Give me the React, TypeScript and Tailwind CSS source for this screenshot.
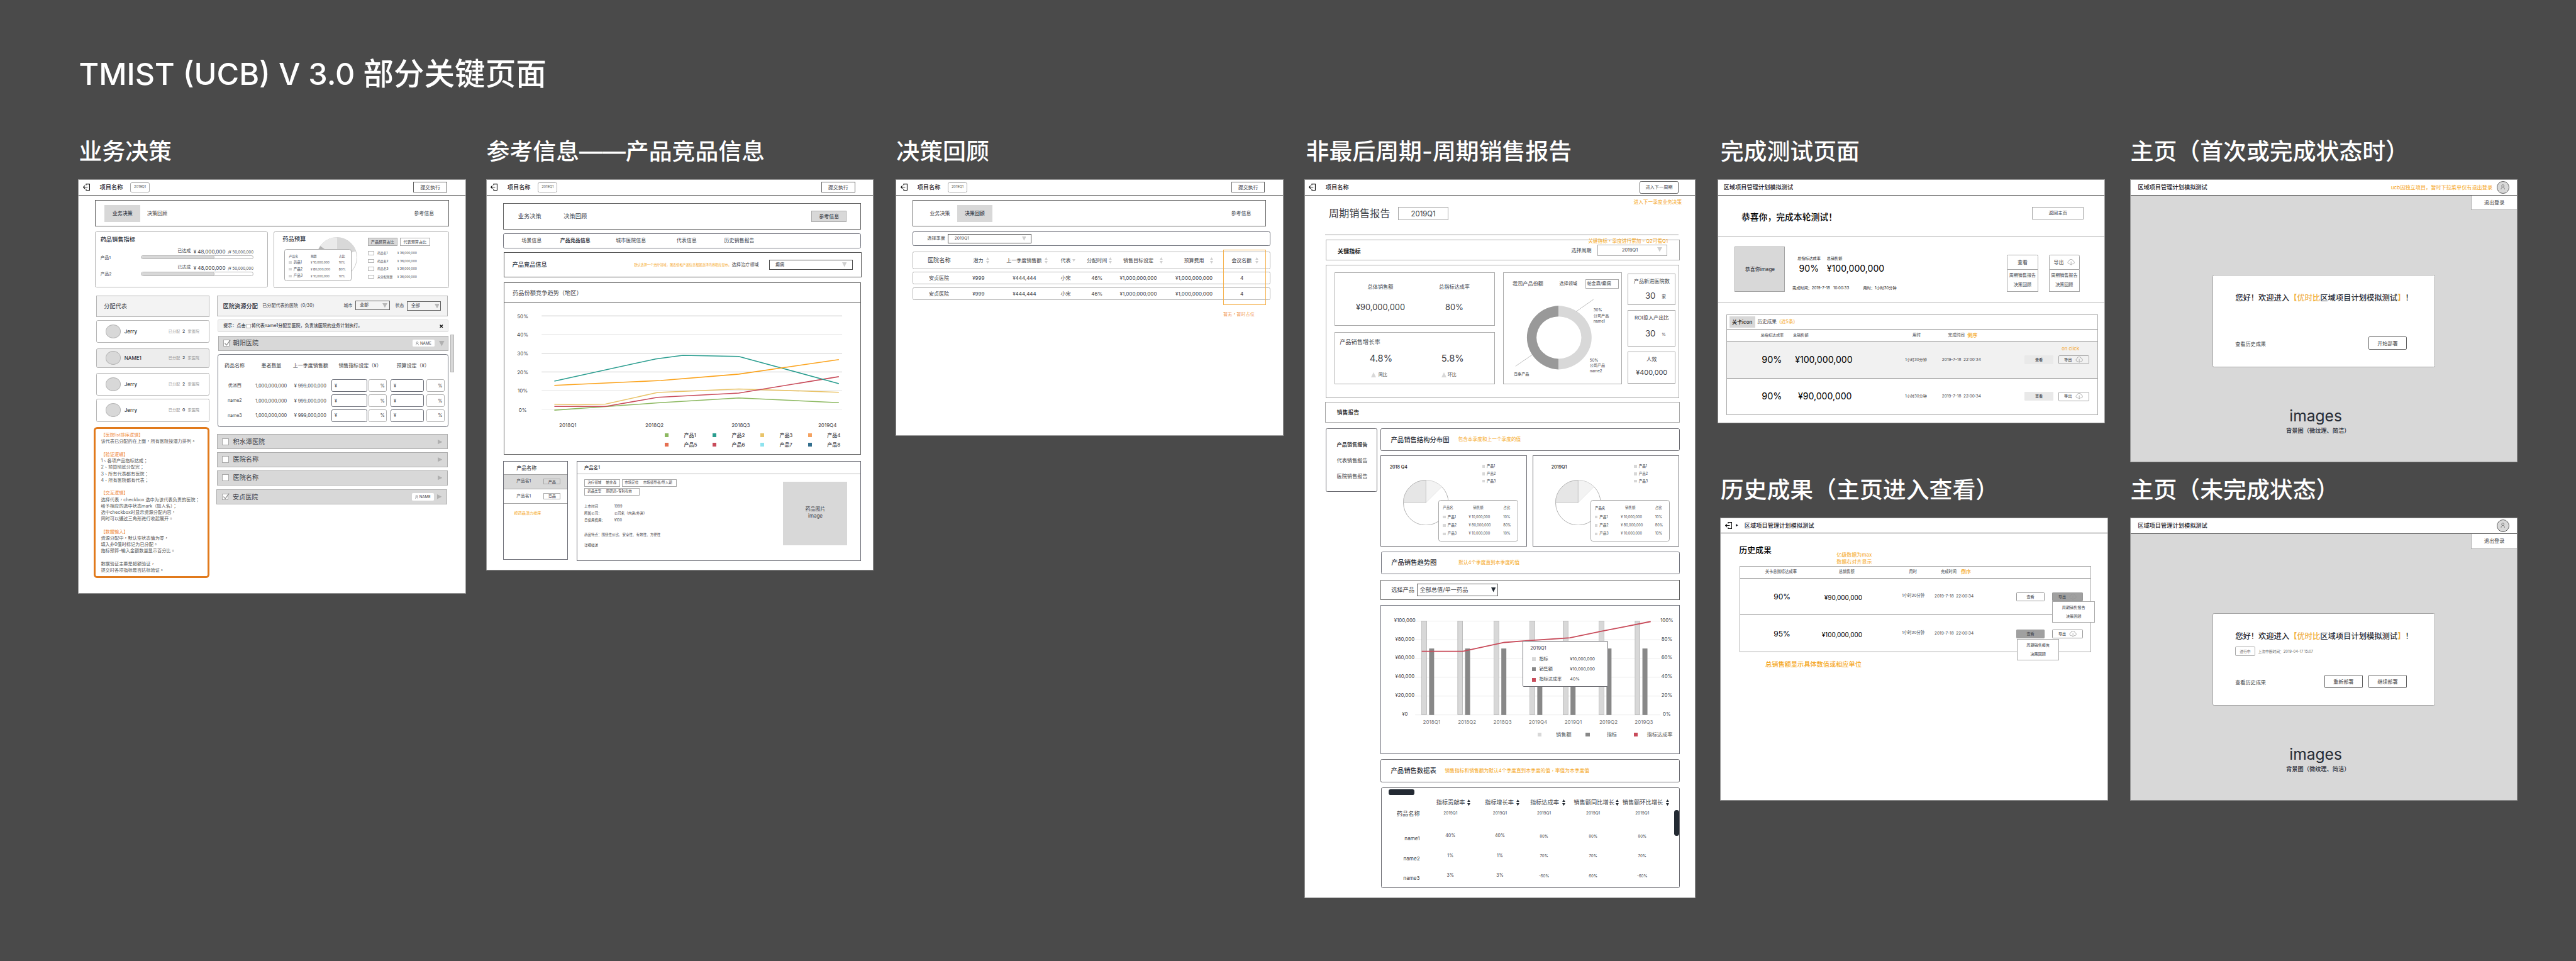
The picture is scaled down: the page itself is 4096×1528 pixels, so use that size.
import type { ReactNode } from "react";

/* ---------- shared pieces ---------- */

const TC = "[font-family:Inter,'Noto_Sans_CJK_TC',sans-serif]";

function ExitIcon() {
  return (
    <svg viewBox="0 0 18 18" className="h-[18px] w-[18px] shrink-0" fill="none" stroke="#111" strokeWidth="1.8">
      <path d="M8 4V1h9v16H8v-3" />
      <path d="M1 9h11M5 5L1 9l4 4" />
    </svg>
  );
}

function UserIcon({ className }: { className: string }) {
  return (
    <svg viewBox="0 0 16 20" className={className} fill="none" stroke="currentColor" strokeWidth="1.5">
      <circle cx="8" cy="6" r="4.5" />
      <path d="M1.5 19c0-5 2.500-8.500 6.500-8.500s6.500 3.500 6.500 8.500" />
    </svg>
  );
}

function CloudIcon() {
  return (
    <svg viewBox="0 0 20 16" className="h-[16px] w-[20px] shrink-0" fill="none" stroke="#979797" strokeWidth="1.200">
      <path d="M7 12.500H5a3.800 3.800 0 01-.8-7.400A5.800 5.800 0 0115.500 5a3.800 3.800 0 01-.5 7.500h-2" />
      <path d="M10 6v9M7.800 12.800L10 15l2.200-2.200" />
    </svg>
  );
}

function Down({ className }: { className: string }) {
  return (
    <svg viewBox="0 0 10 10" preserveAspectRatio="none" className={className} fill="currentColor">
      <path d="M0 0h10L5 10z" />
    </svg>
  );
}

function Up({ className }: { className: string }) {
  return (
    <svg viewBox="0 0 10 10" preserveAspectRatio="none" className={className} fill="currentColor">
      <path d="M0 10h10L5 0z" />
    </svg>
  );
}

function RightTri({ className }: { className: string }) {
  return (
    <svg viewBox="0 0 10 10" preserveAspectRatio="none" className={className} fill="currentColor">
      <path d="M0 0v10L10 5z" />
    </svg>
  );
}

function Sort({ className = "text-[#cfcfcf]" }: { className?: string }) {
  return (
    <span className={"flex flex-col gap-[2px] " + className}>
      <Up className="h-[7px] w-[8px]" />
      <Down className="h-[7px] w-[8px]" />
    </span>
  );
}

function Check({ checked = false }: { checked?: boolean }) {
  return (
    <span className="flex h-[17px] w-[17px] shrink-0 border border-[#a8a8a8] bg-white">
      {checked && (
        <svg viewBox="0 0 20 20" className="-mt-[3px] ml-[1px] h-[18px] w-[19px] shrink-0 overflow-visible" fill="none" stroke="#8a8a8a" strokeWidth="2.200">
          <path d="M2 10l5 6L18 1" />
        </svg>
      )}
    </span>
  );
}

function BoardHead({ badge = true, children }: { badge?: boolean; children: ReactNode }) {
  return (
    <header className="flex h-[40px] shrink-0 items-center border-b border-[#5c5c5c] pl-[11px]">
      <ExitIcon />
      <span className="ml-[25px] w-[79px] text-[15px] font-medium text-[#1f232b]">项目名称</span>
      {badge && (
        <span className="flex h-[26px] w-[50px] items-center justify-center rounded-[4px] border border-[#a8a8a8] text-[9px] text-[#555]">
          2019Q1
        </span>
      )}
      <div className="ml-auto flex">{children}</div>
    </header>
  );
}

function SubmitButton() {
  return (
    <span className="mr-[47px] flex h-[28px] w-[87px] items-center justify-center border border-[#666] text-[13px]">
      提交执行
    </span>
  );
}

function Title({ children }: { children: ReactNode }) {
  return <h2 className="flex h-[80px] items-center pt-[3px] text-[60px] font-medium text-white">{children}</h2>;
}

/* ---------- 业务决策 ---------- */

function Target({ name }: { name: string }) {
  return (
    <div className="flex h-[43px] shrink-0 items-start">
      <span className="mt-[19px] w-[104px] text-[11px] leading-[13px]">{name}</span>
      <div className="w-[292px]">
        <div className="flex h-[19px] items-center justify-end text-[13px]">
          <span className="-mt-[2px] text-[11.500px]">已达成</span>
          <span className="ml-[7px]">¥ 48,000,000</span>
          <span className="mt-[3px] ml-[6px] text-[10px]">/¥ 50,000,000</span>
        </div>
        <div className="h-[11px] overflow-hidden rounded-full border border-[#b4b4b4]">
          <div className="h-full w-[189px] rounded-r-full border-r border-[#b4b4b4] bg-[#d8d8d8]" />
        </div>
      </div>
    </div>
  );
}

function BudgetTip() {
  const rows = [
    ["药品1", "¥ 10,000,000", "10%"],
    ["产品2", "¥ 80,000,000", "80%"],
    ["产品3", "¥ 10,000,000", "10%"],
  ];
  return (
    <div className="absolute top-[44px] left-[26px] flex h-[83px] w-[173px] flex-col rounded-[6px] border border-[#a8a8a8] bg-white pt-[8px] pl-[10px] text-[8px]">
      <div className="grid h-[17px] grid-cols-[56px_73px_20px] items-center">
        <span>产品名</span>
        <span>预算</span>
        <span>占比</span>
      </div>
      {rows.map((r, i) => (
        <div key={i} className="grid h-[17.400px] grid-cols-[12px_44px_73px_20px] items-center">
          <i className="h-[7px] w-[7px] bg-[#d8d8d8]" />
          <span className="text-[9px]">{r[0]}</span>
          <span>{r[1]}</span>
          <span>{r[2]}</span>
        </div>
      ))}
    </div>
  );
}

function Rep({ name, count, className }: { name: string; count: string; className: string }) {
  return (
    <div className={"ml-[7px] grid w-[292px] shrink-0 grid-cols-[49px_114px_36px_14px_30px] items-center rounded-[4px] border border-[#b4b4b4] pl-[22px] " + className}>
      <i className="h-[36px] w-[40px] rounded-[50%] border border-[#b4b4b4] bg-[#d8d8d8]" />
      <span className="text-[13px] font-medium text-[#2b303b]">{name}</span>
      <span className="text-[10px] text-[#999]">已分配</span>
      <b className="text-[11px] font-medium">{count}</b>
      <span className="text-[10px] text-[#999]">家医院</span>
    </div>
  );
}

function Note() {
  const lines: [string, boolean?][] = [
    ["【医院list排序逻辑】", true],
    ["该代表已分配的在上面，所有医院按潜力排列。"],
    [""],
    ["【验证逻辑】", true],
    ["1、各项产品指标达成；"],
    ["2、预算彻底分配完；"],
    ["3、所有代表都有医院；"],
    ["4、所有医院都有代表；"],
    [""],
    ["【交互逻辑】", true],
    ["选择代表，checkbox 选中为该代表负责的医院；"],
    ["给予相应的选中状态mark（如人名）；"],
    ["选中checkbox时显示资源分配内容，"],
    ["同时可以通过三角形进行收起展开。"],
    [""],
    ["【数据输入】", true],
    ["资源分配中，默认空状态值为零，"],
    ["填入非0值时标记为已分配。"],
    ["指标预算-输入金额数量显示百分比。"],
    [""],
    ["数据验证主要是超额验证，"],
    ["提交时各项指标是否达标验证。"],
  ];
  return (
    <div className={"mt-[14px] h-[390px] shrink-0 rounded-[9px] border-[5px] border-[#e17a1c] pt-[8px] pl-[14px] text-[11.700px] leading-[16.650px] text-[#555] " + TC}>
      {lines.map(([t, head], i) => (
        <p key={i} className={head ? "h-[16.650px] text-[#f08c42]" : "h-[16.650px]"}>
          {t}
        </p>
      ))}
    </div>
  );
}

function Money({ className }: { className: string }) {
  return <span className={"flex items-center rounded-[4px] border border-[#6c6f79] pl-[7px] " + className}>¥</span>;
}

function Percent({ className }: { className: string }) {
  return <span className={"flex items-center justify-end rounded-[4px] border border-[#b0b0b0] pr-[4px] " + className}>%</span>;
}

function NameTag() {
  return (
    <span className="flex h-[18px] w-[56px] items-center justify-center gap-[3px] rounded-[3px] bg-white text-[10px]">
      <UserIcon className="h-[10px] w-[8px]" />
      NAME
    </span>
  );
}

function Hospital({ name, assigned, className }: { name: string; assigned?: boolean; className: string }) {
  return (
    <div className={"flex w-[597px] shrink-0 items-center border border-[#adadad] bg-[#d8d8d8] pl-[12px] " + className}>
      <Check checked={assigned} />
      <span className="ml-[11px] text-[16.500px]">{name}</span>
      <div className="ml-auto flex items-center">
        {assigned && <NameTag />}
        <RightTri className="mr-[13px] ml-[9px] h-[12px] w-[12px] text-[#b0b0b0]" />
      </div>
    </div>
  );
}

function DecisionBoard() {
  const budgets = ["药品名1", "药品名2", "药品名3", "未分配预算"];
  return (
    <section className="flex h-[1068px] w-[999px] flex-col bg-white outline outline-[#979797]">
      <BoardHead>
        <SubmitButton />
      </BoardHead>
      <nav className="mt-[12px] ml-[41px] flex h-[69px] w-[916px] shrink-0 items-center border border-[#5f5f5f] pl-[24px] text-[13px]">
        <span className="flex h-[44px] w-[92px] items-center justify-center bg-[#d8d8d8] font-medium">业务决策</span>
        <span className="ml-[18px]">决策回顾</span>
        <span className="mr-[37px] ml-auto">参考信息</span>
      </nav>
      <div className="mt-[12px] ml-[42px] flex shrink-0 gap-[15px]">
        <div className="flex h-[146px] w-[447px] flex-col rounded-[4px] border border-[#b4b4b4] pl-[12px]">
          <h3 className="mt-[10px] mb-[12px] text-[15px] leading-[19px] font-medium text-[#2b303b]">药品销售指标</h3>
          <Target name="产品1" />
          <Target name="产品2" />
        </div>
        <div className="relative h-[147px] w-[453px] rounded-[4px] border border-[#b4b4b4]">
          <h3 className="absolute top-[9px] left-[21px] text-[15px] leading-[19px] font-medium text-[#2b303b]">药品预算</h3>
          <svg viewBox="-53 -53 106 106" className="absolute top-[13px] left-[108px] h-[106px] w-[106px]">
            <circle r="52" fill="#fff" stroke="#b0b0b0" />
            <path d="M0 0V-52A52 52 0 0149.200-17z" fill="#d8d8d8" />
            <path d="M0 0V-52A52 52 0 00-42.500-30z" fill="#eaeaea" />
            <path d="M0 0L-42.500-30A52 52 0 00-52 0z" fill="#b4b4b4" />
          </svg>
          <BudgetTip />
          <div className="mt-[15px] ml-[241px]">
            <div className="flex gap-[7px] text-[10px]">
              <span className="flex h-[21px] w-[77px] items-center justify-center border border-[#a8a8a8] bg-[#d8d8d8]">产品预算占比</span>
              <span className="flex h-[21px] w-[77px] items-center justify-center border border-[#a8a8a8]">代表预算占比</span>
            </div>
            <ul className="mt-[9px] text-[8px]">
              {budgets.map((b) => (
                <li key={b} className="grid h-[20.300px] grid-cols-[25px_52px_60px] items-center">
                  <i className="h-[11px] w-[17px] border border-[#b4b4b4]" />
                  <span>{b}</span>
                  <span>¥ 36,000,000</span>
                </li>
              ))}
            </ul>
          </div>
        </div>
      </div>
      <div className="mt-[20px] ml-[38px] flex">
        <div className="flex w-[299px] flex-col">
          <div className="ml-[7px] flex h-[54px] w-[292px] shrink-0 items-center border border-[#b4b4b4] bg-[#f3f3f3] pl-[18px] text-[15px]">
            分配代表
          </div>
          <Rep name="Jerry" count="2" className="mt-[9px] h-[59px]" />
          <Rep name="NAME1" count="2" className="mt-[14px] h-[50px] bg-[#ededed]" />
          <Rep name="Jerry" count="2" className="mt-[13px] h-[59px]" />
          <Rep name="Jerry" count="0" className="mt-[8px] h-[60px]" />
          <Note />
        </div>
        <div className="ml-[20px] flex flex-col">
          <div className="flex h-[53px] w-[597px] shrink-0 items-center border border-[#b4b4b4] bg-[#f3f3f3] pl-[14px] text-[11.500px]">
            <span className="w-[102px] text-[15px] font-medium text-[#2b303b]">医院资源分配</span>
            <span className="w-[210px]">已分配代表的医院（0/30）</span>
            <span className="w-[31px]">城市</span>
            <span className="-mt-[3px] flex h-[25px] w-[88px] items-center justify-between border border-[#5f5f5f] pr-[5px] pl-[9px]">
              全部
              <Down className="h-[12px] w-[13px] text-[#b8b8b8]" />
            </span>
            <span className="ml-[14px] w-[31px]">状态</span>
            <span className="flex h-[25px] w-[88px] items-center justify-between border border-[#5f5f5f] pr-[3px] pl-[9px]">
              全部
              <Down className="h-[12px] w-[13px] text-[#b8b8b8]" />
            </span>
          </div>
          <div className="mt-[9px] ml-[2px] flex h-[32px] w-[596px] shrink-0 items-center rounded-[3px] border border-[#dcdcdc] bg-[#f3f3f3] pl-[13px] text-[11.500px] font-medium">
            提示：点击
            <i className="mx-[1px] h-[12px] w-[13px] border border-[#b4b4b4] bg-white" />
            将代表name1分配至医院，负责该医院的业务计划执行。
            <svg viewBox="0 0 10 10" className="mr-[11px] ml-auto h-[9px] w-[9px]" stroke="#111" strokeWidth="2.400">
              <path d="M1 1l8 8M9 1L1 9" />
            </svg>
          </div>
          <div className="mt-[7px] flex shrink-0 gap-[5px]">
            <div className="flex flex-col">
              <div className="mt-[2px] ml-[3px] flex h-[39px] w-[595px] items-center border border-[#adadad] bg-[#d8d8d8] pl-[11px]">
                <Check checked />
                <span className="ml-[9px] text-[16.500px]">朝阳医院</span>
                <div className="ml-auto flex items-center">
                  <NameTag />
                  <Down className="mt-[2px] mr-[8px] ml-[12px] h-[14px] w-[14px] text-[#b0b0b0]" />
                </div>
              </div>
              <div className="mt-[8px] ml-[2px] h-[190px] w-[596px] rounded-[6px] border border-[#6c6f79] text-[12px]">
                <div className="mt-[16px] grid h-[24px] grid-cols-[95px_82px_118px_150px_90px] items-center pl-[16px] text-[13px]">
                  <span>药品名称</span>
                  <span>患者数量</span>
                  <span>上一季度销售额</span>
                  <span>销售指标设定（¥）</span>
                  <span>预算设定（¥）</span>
                </div>
                <div className="mt-[24px] flex flex-col gap-[5.500px]">
                  {["优派西", "name2", "name3"].map((n) => (
                    <div key={n} className="flex h-[33.500px] items-center">
                      <span className="w-[85px] text-center text-[11.500px]">{n}</span>
                      <span className="w-[106px] pr-[3px] text-center">1,000,000,000</span>
                      <span className="w-[99px] pr-[6px] text-center">¥ 999,000,000</span>
                      <Money className="ml-[2px] h-full w-[93px]" />
                      <Percent className="ml-[4px] h-full w-[47px]" />
                      <Money className="ml-[9px] h-full w-[86px]" />
                      <Percent className="ml-[7px] h-full w-[47px]" />
                    </div>
                  ))}
                </div>
              </div>
            </div>
            <i className="h-[97px] w-[10px] border border-[#b4b4b4] bg-[#d8d8d8]" />
          </div>
          <Hospital name="积水潭医院" className="mt-[18px] h-[39px]" />
          <Hospital name="医院名称" className="mt-[7px] h-[39px]" />
          <Hospital name="医院名称" className="mt-[8px] h-[39px]" />
          <Hospital name="安贞医院" assigned className="mt-[10px] -ml-[1px] h-[40px]" />
        </div>
      </div>
    </section>
  );
}

/* ---------- 参考信息 ---------- */

function TrendChart() {
  const grid: [string, number, string][] = [
    ["50%", 350.5, "#cacaca"],
    ["40%", 398.7, "#e2e2e2"],
    ["30%", 447.3, "#cacaca"],
    ["20%", 495.5, "#cacaca"],
    ["10%", 543.7, "#e2e2e2"],
    ["0%", 592.7, "#efefef"],
  ];
  const lines: [string, string][] = [
    ["#8cb860", "174.800,594.300 307,585 442,575.500 651.600,562.800 910.500,575"],
    ["#e9c46a", "174.800,579 236,580.400 307,578.500 442,548.700 651.600,539.500 910.500,548"],
    ["#c84b5a", "174.800,584.600 307,584.600 442,561.300 651.600,550.200 910.500,507.700"],
    ["#2a9d8f", "174.800,519.200 437,461.800 507,452.600 651.600,455.300 910.500,525.700"],
    ["#fba31c", "174.800,530.300 450,517.700 651.600,501.200 910.500,463.700"],
  ];
  const xs: [string, number][] = [
    ["2018Q1", 209.5],
    ["2018Q2", 433.7],
    ["2018Q3", 656.8],
    ["2019Q4", 881],
  ];
  return (
    <svg viewBox="44 316 925 330" className="h-[330px] w-[925px] shrink-0" fill="#3d4148" fontSize="13" textAnchor="middle">
      {grid.map(([t, y, c]) => (
        <g key={t}>
          <path d={`M142 ${y}H919`} stroke={c} strokeWidth="1.600" />
          <text x="93" y={y + 5.5}>
            {t}
          </text>
        </g>
      ))}
      {lines.map(([c, p]) => (
        <polyline key={c} points={p} stroke={c} strokeWidth="2.500" fill="none" />
      ))}
      {xs.map(([t, x]) => (
        <text key={t} x={x} y="638.500">
          {t}
        </text>
      ))}
    </svg>
  );
}

function LegendItem({ name, className }: { name: string; className: string }) {
  return (
    <span className="grid grid-cols-[50px_73px] items-center">
      <i className={"h-[10px] w-[10px] " + className} />
      <span>{name}</span>
    </span>
  );
}

function ReferenceBoard() {
  return (
    <section className="flex h-[1008px] w-[1000px] flex-col bg-white outline outline-[#979797]">
      <BoardHead>
        <SubmitButton />
      </BoardHead>
      <nav className="mt-[20px] ml-[43px] flex h-[69px] w-[925px] shrink-0 items-center border border-[#5f5f5f] pl-[37px] text-[15px]">
        <span>业务决策</span>
        <span className="ml-[58px]">决策回顾</span>
        <span className="mr-[35px] ml-auto flex h-[30px] w-[91px] items-center justify-center border border-[#a8a8a8] bg-[#d8d8d8] text-[13px] font-medium">
          参考信息
        </span>
      </nav>
      <nav className="mt-[10px] ml-[43px] grid h-[38px] w-[925px] shrink-0 grid-cols-[100px_144px_157px_123px_90px] items-center rounded-[4px] border border-[#72747e] pb-[4px] pl-[46px] text-[13px]">
        <span>场景信息</span>
        <span className="font-semibold">产品竞品信息</span>
        <span>城市医院信息</span>
        <span>代表信息</span>
        <span>历史销售报告</span>
      </nav>
      <div className="mt-[11px] ml-[44px] flex h-[64px] w-[926px] shrink-0 items-center border border-[#555] pl-[21px] text-[11.600px]">
        <span className="w-[315px] text-[15px] font-medium text-[#2b303b]">产品竞品信息</span>
        <span className="w-[253px] text-[8.400px] text-[#f5a623]">默认选择一个治疗领域，图表值和产品信息根据选择内容相应显示。</span>
        <span className="w-[97px]">选择治疗领域</span>
        <span className="flex h-[26px] w-[215px] items-center justify-between border border-[#4f4f4f] pr-[14px] pl-[14px]">
          癫痫
          <Down className="h-[12px] w-[12px] text-[#cfcfcf]" />
        </span>
      </div>
      <div className="mt-[14px] ml-[44px] flex h-[445px] w-[925px] shrink-0 flex-col border border-[#5f5f5f]">
        <h3 className="flex h-[50px] shrink-0 items-center border-b border-[#5f5f5f] pl-[22px] text-[15px]">药品份额竞争趋势（地区）</h3>
        <div className="-ml-[1.600px]">
          <TrendChart />
        </div>
        <div className="ml-[415px] grid grid-cols-[123.500px_123.500px_123.500px_123.500px] gap-y-[8px] pt-[4px] text-[13px] leading-[17px] font-medium">
          <LegendItem name="产品1" className="bg-[#8cb860]" />
          <LegendItem name="产品2" className="bg-[#2a9d8f]" />
          <LegendItem name="产品3" className="bg-[#e9c46a]" />
          <LegendItem name="产品4" className="bg-[#f4a261]" />
          <LegendItem name="产品5" className="bg-[#e56f51]" />
          <LegendItem name="产品6" className="bg-[#c84b5a]" />
          <LegendItem name="产品7" className="bg-[#8ee3ef]" />
          <LegendItem name="产品8" className="bg-[#336f8f]" />
        </div>
      </div>
      <div className="mt-[17px] ml-[43px] flex shrink-0 gap-[23px]">
        <aside className="h-[255px] w-[167px] border border-[#6b6c75] text-[11px]">
          <h3 className="flex h-[31px] items-center pl-[33px] text-[13px] font-medium">产品名称</h3>
          <div className="flex h-[39px] items-center border-y border-[#a3a3a3] bg-[#d8d8d8] pl-[33px]">
            <span className="w-[70px]">产品名1</span>
            <span className="flex h-[16px] w-[44px] items-center justify-center border border-[#a8a8a8] text-[10px]">产品</span>
          </div>
          <div className="flex h-[39px] items-center border-b border-[#a3a3a3] pl-[33px]">
            <span className="w-[70px]">产品名1</span>
            <span className="flex h-[16px] w-[44px] items-center justify-center border border-[#a8a8a8] text-[10px]">竞品</span>
          </div>
          <p className="mt-[17px] pl-[27px] text-[10px] text-[#f5a623]">按药品潜力排序</p>
        </aside>
        <div className="h-[257px] w-[735px] border border-[#6b6c75] text-[9px]">
          <h3 className="flex h-[32px] items-center border-b border-[#b8b8b8] pl-[18px] text-[12px] font-medium">产品名1</h3>
          <div className="flex justify-between pr-[33px] pl-[18px]">
            <div>
              <div className="mt-[12px] flex gap-[4px]">
                <span className="flex h-[20px] w-[93px] items-center gap-[12px] border border-[#a8a8a8] pl-[7px]">
                  <span>治疗领域</span>
                  <span>帕金森</span>
                </span>
                <span className="flex h-[20px] w-[142px] items-center gap-[12px] border border-[#a8a8a8] pl-[6px]">
                  <span>市场定位</span>
                  <span>市场领导者/导入期</span>
                </span>
              </div>
              <div className="mt-[3px] flex h-[20px] w-[143px] items-center gap-[12px] border border-[#a8a8a8] pl-[7px]">
                <span>药品类型</span>
                <span>原研药-专利有效</span>
              </div>
              <div className="mt-[20px] grid grid-cols-[78px_160px] leading-[17.800px]">
                <span>上市时间</span>
                <span>1999</span>
                <span>所属公司：</span>
                <span>公司名（内资/外资）</span>
                <span>日使用费用：</span>
                <span>¥100</span>
              </div>
              <p className="mt-[23px] leading-[12px]">药品特点：围绕性价比、安全性、有效性、方便性</p>
              <p className="mt-[15px] leading-[12px]">详细描述</p>
            </div>
            <div className="mt-[19px] flex h-[165px] w-[166px] flex-col items-center justify-center bg-[#d8d8d8] pb-[4px] text-[13px] leading-[18px]">
              <span>药品图片</span>
              <span>image</span>
            </div>
          </div>
        </div>
      </div>
    </section>
  );
}

/* ---------- 决策回顾 ---------- */

function ReviewRow({ className }: { className: string }) {
  return (
    <div className={"grid h-[33px] w-[925px] shrink-0 grid-cols-[113px_91px_147px_66px_96px_118px_170px_77px] items-center rounded-[4px] border border-[#b4b4b4] pl-[10px] text-center text-[13px] " + className}>
      <span>安贞医院</span>
      <span>¥999</span>
      <span>¥444,444</span>
      <span>小宋</span>
      <span>46%</span>
      <span>¥1,000,000,000</span>
      <span>¥1,000,000,000</span>
      <span>4</span>
    </div>
  );
}

function ReviewBoard() {
  return (
    <section className="relative flex h-[661px] w-[1000px] flex-col bg-white outline outline-[#979797]">
      <BoardHead>
        <SubmitButton />
      </BoardHead>
      <nav className="mt-[12px] ml-[42px] flex h-[69px] w-[914px] shrink-0 items-center border border-[#5f5f5f] pl-[43px] text-[13px]">
        <span>业务决策</span>
        <span className="ml-[18px] flex h-[44px] w-[92px] items-center justify-center bg-[#d8d8d8] font-medium">决策回顾</span>
        <span className="mr-[37px] ml-auto">参考信息</span>
      </nav>
      <div className="mt-[12px] ml-[42px] flex h-[38px] w-[925px] shrink-0 items-center rounded-[4px] border border-[#6c6f79] pl-[36px] text-[11.600px]">
        <span className="w-[54px]">选择季度</span>
        <span className="flex h-[25px] w-[215px] items-center justify-between border border-[#4f4f4f] pr-[12px] pl-[15px] text-[11px]">
          2019Q1
          <Down className="h-[11px] w-[11px] text-[#cfcfcf]" />
        </span>
      </div>
      <div className="mt-[15px] ml-[42px] grid h-[45px] w-[925px] shrink-0 grid-cols-[118px_33px_53px_99px_41px_30px_38px_57px_37px_95px_62px_67px_56px_61px_20px] items-center rounded-[4px] border border-[#b4b4b4] pl-[37px] text-[13px]">
        <span className="text-[15px]">医院名称</span>
        <span>潜力</span>
        <Sort />
        <span>上一季度销售额</span>
        <Sort />
        <span>代表</span>
        <Down className="h-[7px] w-[8px] text-[#cfcfcf]" />
        <span>分配时间</span>
        <Sort />
        <span>销售目标设定</span>
        <Sort />
        <span>预算费用</span>
        <Sort />
        <span>会议名额</span>
        <Sort />
      </div>
      <ReviewRow className="mt-[7px] ml-[42px]" />
      <ReviewRow className="mt-[7px] ml-[42px]" />
      <i className="absolute top-[180px] left-[845px] h-[144px] w-[111px] border border-[#f5b04a]" />
      <p className={"mt-[30px] ml-[845px] text-[11.600px] text-[#f0954f] " + TC}>暂无，暂时占位</p>
    </section>
  );
}

/* ---------- 周期销售报告 ---------- */

function Donut() {
  return (
    <svg viewBox="513 300 307 228" className="h-[228px] w-[307px] overflow-visible" fill="#3d4148" fontSize="10">
      <path d="M656.400 326A86 82.600 0 00656.400 491V463.300A57 54.600 0 01656.400 354z" fill="#999" />
      <path d="M656.400 326A90 82.600 0 01656.400 491V463.300A59 54.600 0 00656.400 354z" fill="#d8d8d8" />
      <path d="M746.800 309.800L702 341.200M545.200 482.600L588 453.300" stroke="#979797" />
      <text x="746.800" y="341">30%</text>
      <text x="746.800" y="355.500">公司产品</text>
      <text x="746.800" y="370">name1</text>
      <text x="737" y="470">50%</text>
      <text x="737" y="484.500">公司产品</text>
      <text x="737" y="499">name2</text>
      <text x="540.600" y="506.300">竞争产品</text>
    </svg>
  );
}

function SmallCard({ title, children, className }: { title: string; children: ReactNode; className: string }) {
  return (
    <div className={"flex w-[123px] flex-col items-center border border-[#a8a8a8] " + className}>
      <span className="text-[13.300px] leading-[17px]">{title}</span>
      {children}
    </div>
  );
}

function KeyIndicators() {
  return (
    <div className="mt-[11px] ml-[55px] flex h-[345px] w-[913px] shrink-0 border border-[#a8a8a8] pt-[17px] pl-[20px]">
      <div className="flex w-[415px] flex-col gap-[16px]">
        <div className="flex h-[139px] border border-[#a8a8a8] pl-[22px]">
          <div className="flex w-[191px] flex-col items-center pt-[28px]">
            <span className="text-[13.300px] leading-[17px]">总体销售额</span>
            <span className="mt-[31px] text-[21px] leading-[26px]">¥90,000,000</span>
          </div>
          <div className="flex w-[191px] flex-col items-center pt-[28px]">
            <span className="text-[13.300px] leading-[17px]">总指标达成率</span>
            <span className="mt-[31px] text-[21px] leading-[26px]">80%</span>
          </div>
        </div>
        <div className="h-[135px] border border-[#a8a8a8]">
          <h4 className="mt-[15px] ml-[12px] text-[15px] leading-[19px]">产品销售增长率</h4>
          <div className="mt-[18px] ml-[26px] grid grid-cols-[186px_184px] text-center text-[24px] leading-[30px]">
            <span>4.8%</span>
            <span>5.8%</span>
          </div>
          <div className="mt-[19px] flex items-center pl-[93px] text-[11.500px] leading-[15px]">
            <Up className="mr-[6px] h-[13px] w-[13px] text-[#d8d8d8]" />
            同比
            <Up className="mr-[3px] ml-[140px] h-[13px] w-[13px] text-[#d8d8d8]" />
            环比
          </div>
        </div>
      </div>
      <div className="ml-[22px] h-[290px] w-[307px] border border-[#a8a8a8]">
        <div className="mt-[15px] flex h-[28px] items-center pl-[22px] text-[11.600px]">
          <span className="w-[121px] text-[13.300px]">我司产品份额</span>
          <span className="w-[68px]">选择领域</span>
          <span className="flex h-[25px] w-[86px] items-center border border-[#a8a8a8] pl-[2px]">帕金森/癫痫</span>
        </div>
        <div className="mt-[17px] -ml-[2px]">
          <Donut />
        </div>
      </div>
      <div className="mt-[4px] ml-[15px] flex flex-col gap-[13.500px]">
        <SmallCard title="产品新进医院数" className="h-[81px] pt-[10px]">
          <span className="mt-[11px] ml-[20px] flex items-center text-[21.500px] leading-[30px]">
            30<span className="mt-[6px] ml-[16px] text-[11px]">家</span>
          </span>
        </SmallCard>
        <SmallCard title="ROI投入产出比" className="h-[94px] pt-[10px]">
          <span className="mt-[14px] ml-[20px] flex items-center text-[21.500px] leading-[30px]">
            30<span className="mt-[6px] ml-[16px] text-[11px]">%</span>
          </span>
        </SmallCard>
        <SmallCard title="人效" className="h-[82px] pt-[9px]">
          <span className="mt-[14px] text-[17.700px] leading-[24px]">¥400,000</span>
        </SmallCard>
      </div>
    </div>
  );
}

function PieCard({ title, shift, headShift }: { title: string; shift: string; headShift?: string }) {
  const rows = [
    ["产品1", "¥ 10,000,000", "10%"],
    ["产品2", "¥ 80,000,000", "80%"],
    ["产品3", "¥ 10,000,000", "10%"],
  ];
  return (
    <div className="relative h-[236px] w-[379px] border border-[#6a6a70] text-[9px]">
      <div className="flex pt-[17px]">
        <span className={"pt-[5px] text-[11.500px] leading-[14px] font-medium text-[#222] " + shift}>{title}</span>
        <ul className="w-[50px]">
          {rows.map((r) => (
            <li key={r[0]} className="flex h-[19.300px] items-center gap-[5px]">
              <i className="h-[7px] w-[7px] bg-[#d8d8d8]" />
              {r[0]}
            </li>
          ))}
        </ul>
      </div>
      <svg viewBox="-59 -59 118 118" className="absolute top-[61px] left-[57px] h-[118px] w-[118px]" stroke="#b0b0b0" strokeWidth="1">
        <circle r="58.200" fill="#fff" strokeWidth="1.600" />
        <path d="M0 0L41-41A58.200 58.200 0 000-58.200z" fill="#f3f3f3" stroke="#dcdcdc" />
        <path d="M0 0H-58.200A58.200 58.200 0 010-58.200z" fill="#e6e6e6" />
      </svg>
      <div className="absolute top-[114px] left-[148px] h-[106px] w-[206px] rounded-[6px] border border-[#a8a8a8] bg-white pt-[9px] pl-[10px]">
        <div className="grid h-[17px] grid-cols-[78px_78px_30px] items-center">
          <span className={headShift}>产品名</span>
          <span>销售额</span>
          <span>占比</span>
        </div>
        <div className="mt-[5px]">
          {rows.map((r) => (
            <div key={r[0]} className="grid h-[21.800px] grid-cols-[12px_55px_89px_30px] items-center">
              <i className="h-[7px] w-[7px] bg-[#d8d8d8]" />
              <span>{r[0]}</span>
              <span>{r[1]}</span>
              <span>{r[2]}</span>
            </div>
          ))}
        </div>
      </div>
    </div>
  );
}

function SalesChart() {
  const ticks: [string, string, number][] = [
    ["¥100,000", "100%", 1140.5],
    ["¥80,000", "80%", 1188.5],
    ["¥60,000", "60%", 1237],
    ["¥40,000", "40%", 1285.7],
    ["¥20,000", "20%", 1334.5],
    ["¥0", "0%", 1383],
  ];
  const bars: [string, number, number][] = [
    ["2018Q1", 301.2, 326.6],
    ["2018Q2", 394.2, 418.3],
    ["2018Q3", 487.9, 510],
    ["2019Q4", 580.9, 601.8],
    ["2019Q1", 666.8, 692.8],
    ["2019Q2", 759.8, 783.9],
    ["2019Q3", 852.8, 875.6],
  ];
  return (
    <svg viewBox="196 1099 773 316" className="h-[316px] w-[773px] shrink-0" fill="#3d4148" fontSize="12.700" textAnchor="middle">
      {ticks.map(([a, b, y]) => (
        <g key={a}>
          <path d={`M284 ${y}H918`} stroke="#ececec" strokeWidth="1.600" />
          <text x="257.500" y={y + 2.500}>
            {a}
          </text>
          <text x="935" y={y + 2.500}>
            {b}
          </text>
        </g>
      ))}
      {bars.map(([t, x, cx]) => (
        <g key={t}>
          <rect x={x} y="1140.500" width="12.600" height="242.500" fill="#d8d8d8" stroke="#a5a5a5" />
          <rect x={x + 19} y="1211.400" width="13" height="172" fill="#888" />
          <text x={cx} y="1407" fontSize="13" fill="#777">
            {t}
          </text>
        </g>
      ))}
      <polyline
        points="301,1218.700 407.300,1218.700 514.600,1195.700 581,1190.800 684.400,1183.900 760,1168 824.900,1155.400 893.200,1141.700"
        fill="none"
        stroke="#c84b5a"
        strokeWidth="3"
      />
    </svg>
  );
}

function ChartTip() {
  return (
    <div className="absolute top-[92px] left-[365px] h-[119px] w-[222px] rounded-[3px] border border-[#6a6a70] bg-white pl-[15px] text-[11.600px]">
      <p className="mt-[10px] mb-[7px] pl-[4px] text-[12px] leading-[15px]">2019Q1</p>
      <div className="grid h-[27px] grid-cols-[19px_80px_80px] items-center pl-[8px]">
        <i className="h-[10px] w-[10px] bg-[#d8d8d8]" />
        <span>指标</span>
        <span className="text-[11px]">¥10,000,000</span>
      </div>
      <div className="grid h-[25px] grid-cols-[19px_80px_80px] items-center pl-[8px]">
        <i className="h-[10px] w-[10px] bg-[#888]" />
        <span>销售额</span>
        <span className="text-[11px]">¥10,000,000</span>
      </div>
      <div className="grid h-[29px] grid-cols-[19px_80px_80px] items-center pl-[8px]">
        <i className="h-[10px] w-[10px] bg-[#c84b5a]" />
        <span>指标达成率</span>
        <span className="text-[11px]">40%</span>
      </div>
    </div>
  );
}

function DataTable() {
  const heads = ["指标贡献率", "指标增长率", "指标达成率", "销售额同比增长", "销售额环比增长"];
  const rows = [
    ["name1", "40%", "40%", "80%", "80%", "80%"],
    ["name2", "1%", "1%", "70%", "70%", "70%"],
    ["name3", "3%", "3%", "-60%", "60%", "-60%"],
  ];
  return (
    <div className="relative mt-[14px] ml-[1px] h-[259px] w-[773px] shrink-0 rounded-[4px] border border-[#6a6a70]">
      <i className="absolute top-[3px] left-[18px] h-[14px] w-[67px] rounded-[5px] bg-[#232a33]" />
      <i className="absolute top-[56px] right-0 h-[67px] w-[13px] rounded-[6px] bg-[#232a33]" />
      <div className="mt-[27px] grid h-[20px] grid-cols-[81px_45px_82px_35px_83px_30px_109px_17px_112px_20px] items-center pl-[141px] text-[15px]">
        {heads.map((h) => [
          <span key={h}>{h}</span>,
          <Sort key={h + "s"} className="text-[#232a33]" />,
        ])}
      </div>
      <div className="mt-[6px] grid h-[24px] grid-cols-[99px_158px_98px_130px_124px_130px] items-center text-center text-[10.500px]">
        <span className="text-right text-[15px]">药品名称</span>
        <span>2019Q1</span>
        <span>2019Q1</span>
        <span>2019Q1</span>
        <span>2019Q1</span>
        <span>2019Q1</span>
      </div>
      <div className="mt-[22px]">
        {rows.map((r) => (
          <div key={r[0]} className="grid h-[51px] grid-cols-[99px_158px_98px_130px_124px_130px] items-center text-center text-[10px]">
            <span className="mt-[12px] text-right text-[13.300px]">{r[0]}</span>
            <span className="text-[11.500px]">{r[1]}</span>
            <span className="text-[11.500px]">{r[2]}</span>
            <span>{r[3]}</span>
            <span>{r[4]}</span>
            <span>{r[5]}</span>
          </div>
        ))}
      </div>
    </div>
  );
}

function ReportBoard() {
  return (
    <section className="flex h-[1856px] w-[1008px] flex-col bg-white outline outline-[#979797]">
      <BoardHead badge={false}>
        <span className="mr-[42px] flex h-[33px] w-[100px] items-center justify-center rounded-[4px] border border-[#5f5f5f] text-[11.700px]">
          进入下一周期
        </span>
      </BoardHead>
      <p className="mt-[10px] mr-[33px] self-end text-[12.500px] leading-[16px] text-[#f5a623]">进入下一季度业务决策</p>
      <div className="mt-[4px] ml-[53px] flex h-[73px] w-[914px] shrink-0 border-b border-[#979797] pl-[9px]">
        <h3 className="mt-[2px] w-[180px] text-[26.500px] leading-[32px]">周期销售报告</h3>
        <span className="flex h-[35px] w-[129px] items-center justify-center border border-[#a8a8a8] text-[18.500px]">2019Q1</span>
      </div>
      <div className="relative mt-[12px] ml-[55px] flex h-[54px] w-[914px] shrink-0 items-center border border-[#a8a8a8] pl-[28px]">
        <h4 className="mt-[6px] text-[15px] font-semibold text-[#222]">关键指标</h4>
        <span className={"absolute -top-[6px] left-[676px] text-[12.500px] leading-[16px] text-[#f5a623] " + TC}>关键指标，季度进行累加。Q2可看Q1</span>
        <span className="ml-auto w-[68px] text-[13px]">选择周期</span>
        <span className="mr-[30px] flex h-[29px] w-[180px] items-center justify-between border border-[#a8a8a8] pr-[12px] pl-[61px] text-[12px]">
          2019Q1
          <Down className="-mt-[2px] h-[12px] w-[13px] text-[#cfcfcf]" />
        </span>
      </div>
      <KeyIndicators />
      <div className="mt-[10px] ml-[52px] flex h-[53px] w-[917px] shrink-0 items-center border border-[#a8a8a8] pl-[29px] text-[14.500px] font-medium text-[#222]">
        销售报告
      </div>
      <div className="mt-[14px] ml-[55px] flex gap-[8px]">
        <aside className="flex h-[165px] w-[133px] shrink-0 flex-col rounded-[4px] border border-[#6a6a70] pt-[21px] pl-[26px] text-[13.300px] leading-[41px]">
          <span className="font-semibold">产品销售报告</span>
          <span>代表销售报告</span>
          <span>医院销售报告</span>
        </aside>
        <div className="flex w-[774px] flex-col">
          <div className="flex h-[60px] w-[773px] shrink-0 items-center rounded-[4px] border border-[#6a6a70] pl-[25px]">
            <h4 className="w-[174px] text-[16.800px] font-medium text-[#2b303b]">产品销售结构分布图</h4>
            <span className="text-[12.500px] text-[#f5a623]">包含本季度和上一个季度的值</span>
          </div>
          <div className="mt-[11px] flex shrink-0 gap-[14px]">
            <PieCard title="2018 Q4" shift="pl-[22px] w-[261px]" />
            <PieCard title="2019Q1" shift="pl-[47px] w-[261px]" headShift="mt-[5px]" />
          </div>
          <div className="mt-[12px] ml-[1px] flex h-[59px] w-[773px] shrink-0 items-center rounded-[4px] border border-[#72747e] pl-[25px]">
            <h4 className="w-[174px] text-[16.800px] font-medium text-[#2b303b]">产品销售趋势图</h4>
            <span className="text-[12.500px] text-[#f5a623]">默认4个季度直到本季度的值</span>
          </div>
          <div className="mt-[14px] flex h-[53px] w-[774px] shrink-0 items-center border border-[#5f5f5f] pl-[26px] text-[15px]">
            <span className="w-[67px]">选择产品</span>
            <span className="flex h-[33px] w-[210px] items-center justify-between border border-[#5f5f5f] pr-[5px] pl-[5px]">
              全部总值/单一药品
              <Down className="h-[12px] w-[12px] text-[#232a33]" />
            </span>
          </div>
          <div className="relative mt-[12px] h-[386px] w-[774px] shrink-0 border border-[#72747e]">
            <div className="-mt-[1px] -ml-[1px]">
              <SalesChart />
            </div>
            <div className="mt-[11px] flex items-center pl-[405px] text-[13.300px] leading-[17px] text-[#555]">
              <i className="mr-[37px] h-[10px] w-[10px] bg-[#d8d8d8]" />
              <span className="w-[77px]">销售额</span>
              <i className="mr-[44px] h-[10px] w-[10px] bg-[#888]" />
              <span className="w-[70px]">指标</span>
              <i className="mr-[24px] h-[10px] w-[10px] bg-[#c84b5a]" />
              <span>指标达成率</span>
            </div>
            <ChartTip />
          </div>
          <div className="mt-[14px] flex h-[59px] w-[773px] shrink-0 items-center rounded-[4px] border border-[#6a6a70] pl-[25px]">
            <h4 className="w-[140px] text-[16.800px] font-medium text-[#2b303b]">产品销售数据表</h4>
            <span className={"text-[12.600px] text-[#f5a623] " + TC}>销售指标和销售额为默认4个季度直到本季度的值，率值为本季度值</span>
          </div>
          <DataTable />
        </div>
      </div>
    </section>
  );
}

/* ---------- 完成测试页面 ---------- */

function ActionMenu({ children }: { children: ReactNode }) {
  return (
    <div className="w-[80px] text-center">
      <div className="flex h-[39px] items-center justify-center gap-[9px] rounded-t-[4px] border border-[#a8a8a8] text-[13px]">{children}</div>
      <div className="flex h-[57px] flex-col justify-center border border-t-0 border-[#a8a8a8] pb-[1px] text-[11.500px] leading-[23.500px]">
        <span>周期销售报告</span>
        <span>决策回顾</span>
      </div>
    </div>
  );
}

function ResultRow({ amount, note, className }: { amount: string; note?: string; className: string }) {
  return (
    <div className={"grid grid-cols-[61px_115px_157px_184px_253px_87px_80px] items-center text-[10px] " + className}>
      <span className="col-start-2 pl-[29px] text-[23.500px] text-black">90%</span>
      <span className="pr-[10px] text-right text-[23px] text-black">{amount}</span>
      <span className="text-right">1小时30分钟</span>
      <span className="pl-[39px] text-[10.500px]">2019-7-18 &nbsp;22:00:34</span>
      <span className="flex h-[23px] w-[74px] items-center justify-center rounded-[2px] bg-[#e9e9e9] font-medium">查看</span>
      <span className="relative flex h-[24px] w-[80px] items-center justify-center gap-[10px] rounded-[3px] border border-[#a3a3a3] font-medium">
        {note && <span className="absolute -top-[26px] left-[7px] text-[12.500px] font-normal text-[#f5a623]">{note}</span>}
        导出
        <CloudIcon />
      </span>
    </div>
  );
}

function FinishBoard() {
  return (
    <section className="flex h-[628px] w-[999px] flex-col bg-white outline outline-[#979797]">
      <header className="flex h-[40px] shrink-0 items-center border-b border-[#555] pl-[14px] text-[15px] font-medium text-[#1f232b]">
        区域项目管理计划模拟测试
      </header>
      <div className="flex h-[107px] shrink-0 items-start justify-between border-b border-[#a8a8a8] pr-[54px] pl-[60px]">
        <h3 className="mt-[41px] text-[22.500px] leading-[30px] font-medium text-black">恭喜你，完成本轮测试！</h3>
        <span className="mt-[30px] flex h-[33px] w-[133px] items-center justify-center border border-[#a8a8a8] text-[12px]">返回主页</span>
      </div>
      <div className="flex h-[172px] shrink-0 items-start border-b border-[#b4b4b4] pl-[43px]">
        <div className="mt-[25px] flex h-[117px] w-[130px] items-center justify-center border border-[#a3a3a3] bg-[#d8d8d8] text-[13px] font-medium">
          恭喜你image
        </div>
        <div className="mt-[50px] ml-[19px] w-[555px] text-[10px] text-[#222]">
          <div className="grid grid-cols-[76px_160px] pl-[13px] leading-[14px]">
            <span>总指标达成率</span>
            <span>总销售额</span>
          </div>
          <div className="mt-[4px] grid grid-cols-[72px_180px] pl-[17px] text-[23px] leading-[30px] text-black">
            <span>90%</span>
            <span>¥100,000,000</span>
          </div>
          <div className="mt-[28px] flex leading-[14px]">
            <span className="w-[183px]">完成时间：2019-7-18 &nbsp;&nbsp;10:00:33</span>
            <span>用时：1小时30分钟</span>
          </div>
        </div>
        <div className="mt-[47px] flex gap-[28px]">
          <ActionMenu>查看</ActionMenu>
          <ActionMenu>
            导出
            <CloudIcon />
          </ActionMenu>
        </div>
      </div>
      <div className="mt-[30px] ml-[21px] w-[962px] shrink-0 border border-[#a8a8a8]">
        <div className="flex h-[36px] items-center border-b border-[#979797] pl-[6px] text-[12.400px]">
          <span className="flex h-[28px] w-[67px] items-center justify-center bg-[#d8d8d8] text-[13px] font-medium text-[#222]">关卡icon</span>
          <span className="ml-[6px] w-[56px]">历史成果</span>
          <span className="text-[#f5a623]">(近5条)</span>
        </div>
        <div className="grid h-[32px] grid-cols-[84px_309px_92px_50px_60px] items-center border-b border-[#979797] pl-[87px] text-[10px]">
          <span>总指标达成率</span>
          <span>总销售额</span>
          <span className="text-[10.500px]">用时</span>
          <span className="text-[10.700px]">完成时间</span>
          <span className="text-[13px] font-medium text-[#f5a623]">倒序</span>
        </div>
        <ResultRow amount="¥100,000,000" note="on click" className="h-[95px] border-b border-[#979797] bg-[#f1f1f1]" />
        <ResultRow amount="¥90,000,000" className="h-[93px]" />
      </div>
    </section>
  );
}

/* ---------- 历史成果 ---------- */

function HistoryMenu({ className }: { className: string }) {
  return (
    <span className={"absolute z-10 flex h-[55px] w-[110px] flex-col justify-center border border-[#a8a8a8] bg-white text-center text-[10px] leading-[23px] " + className}>
      <span>周期销售报告</span>
      <span>决策回顾</span>
    </span>
  );
}

function HistoryRow({ rate, amount, open, className }: { rate: string; amount: string; open: "view" | "export"; className: string }) {
  return (
    <div className={"grid grid-cols-[87px_75px_154px_161px_237px_93px_80px] items-center text-[10.300px] " + className}>
      <span className="col-start-2 mt-[4px] text-[19.500px] text-black">{rate}</span>
      <span className="mt-[6px] text-right text-[16.200px] text-black">{amount}</span>
      <span className="text-right">1小时30分钟</span>
      <span className="pl-[26px] text-[10.500px]">2019-7-18 &nbsp;22:00:34</span>
      <span className={"relative mt-[3px] flex h-[23px] w-[74px] items-center justify-center rounded-[2px] border border-[#979797] text-[10px] " + (open === "view" ? "bg-[#a0a0a0]" : "")}>
        查看
        {open === "view" && <HistoryMenu className="top-[23px] left-[0px]" />}
      </span>
      <span className={"relative mt-[3px] flex h-[23px] w-[80px] items-center justify-center gap-[8px] rounded-[2px] border border-[#979797] text-[10px] " + (open === "export" ? "bg-[#a0a0a0]" : "")}>
        导出
        <CloudIcon />
        {open === "export" && <HistoryMenu className="top-[21px] left-[-1px]" />}
      </span>
    </div>
  );
}

function HistoryBoard() {
  return (
    <section className="ml-[6px] flex h-[728px] w-[1000px] flex-col bg-white outline outline-[#979797]">
      <header className="flex h-[39px] shrink-0 items-center border-b border-[#555] pl-[12px] text-[15px] font-medium text-[#1f232b]">
        <ExitIcon />
        <RightTri className="mr-[16px] ml-[10px] h-[7px] w-[6px]" />
        区域项目管理计划模拟测试
      </header>
      <div className="flex h-[84px] shrink-0">
        <h3 className="mt-[29px] w-[252px] pl-[48px] text-[21px] leading-[28px] font-medium text-black">历史成果</h3>
        <p className="mt-[47px] ml-[48px] text-[13.100px] leading-[18.600px] text-[#f5a623]">
          亿级数据为max
          <br />
          数据右对齐显示
        </p>
      </div>
      <div className="ml-[49px] w-[909px] shrink-0 border border-[#a8a8a8]">
        <div className="grid h-[31px] grid-cols-[190px_182px_82px_52px_60px] items-center border-b border-[#979797] pl-[65px] text-[10.200px]">
          <span>关卡总指标达成率</span>
          <span>总销售额</span>
          <span>用时</span>
          <span>完成时间</span>
          <span className="-mt-[3px] text-[13px] font-medium text-[#f5a623]">倒序</span>
        </div>
        <HistoryRow rate="90%" amount="¥90,000,000" open="export" className="h-[95px] border-b border-[#979797]" />
        <HistoryRow rate="95%" amount="¥100,000,000" open="view" className="h-[94px]" />
      </div>
      <p className="mt-[21px] ml-[116px] text-[16.600px] leading-[22px] font-medium text-[#f5a623]">总销售额显示具体数值或相应单位</p>
    </section>
  );
}

/* ---------- 主页 ---------- */

function HomeButton({ children }: { children: ReactNode }) {
  return (
    <span className="flex h-[34px] w-[100px] items-center justify-center rounded-[3px] border border-[#5f5f5f] bg-white text-[13.200px]">
      {children}
    </span>
  );
}

function HomeBoard({ note, progress, buttons }: { note?: string; progress?: boolean; buttons: string[] }) {
  return (
    <section className="flex h-[728px] w-[1000px] flex-col bg-[#d8d8d8] outline outline-[#979797]">
      <header className="flex h-[40px] shrink-0 items-center border-b border-[#555] bg-white pr-[21px] pl-[19px] text-[15px] font-medium text-[#1f232b]">
        区域项目管理计划模拟测试
        <span className="ml-auto text-[13.300px] font-normal text-[#f5a623]">{note}</span>
        <span className="ml-[11px] flex h-[32px] w-[32px] items-center justify-center rounded-full border border-[#5f5f5f] bg-[#d8d8d8] text-[#555]">
          <UserIcon className="h-[14px] w-[12px]" />
        </span>
      </header>
      <div className="flex h-[39px] w-[120px] shrink-0 items-center justify-center self-end border-b border-l border-[#b0b0b0] bg-white text-[13.200px]">
        退出登录
      </div>
      <div className="mt-[166px] flex h-[240px] w-[575px] shrink-0 flex-col self-center rounded-[4px] border border-[#a5a5a5] bg-white pr-[71px] pl-[57px]">
        <h3 className="mt-[44px] text-[20px] leading-[28px] font-medium text-[#262b35]">
          您好！欢迎进入<span className="text-[#f0ad3e]">【优时比</span>区域项目计划模拟测试<span className="text-[#f0ad3e]">】</span>！
        </h3>
        <div className="mt-[14px] flex h-[24px] items-center text-[9.400px] text-[#666]">
          {progress && (
            <>
              <span className="mr-[8px] flex h-[24px] w-[51px] items-center justify-center rounded-[3px] border border-[#a8a8a8]">进行中</span>
              上次中断时间：2019-04-17 15:07
            </>
          )}
        </div>
        <div className="mt-[49px] flex items-center justify-between text-[13.200px]">
          <span className="mt-[4px]">查看历史成果</span>
          <div className="flex gap-[14px]">
            {buttons.map((b) => (
              <HomeButton key={b}>{b}</HomeButton>
            ))}
          </div>
        </div>
      </div>
      <div className="mr-[42px] flex w-[200px] flex-col items-center self-center text-[#262b35]">
        <span className="mt-[100px] text-[40px] leading-[50px]">images</span>
        <span className="mt-[3px] ml-[12px] text-[15px] leading-[22px] font-medium">背景图（微纹理、简洁）</span>
      </div>
    </section>
  );
}

/* ---------- canvas ---------- */

export default function App() {
  return (
    <main className="h-[2485px] w-[6661px] overflow-hidden bg-[#4a4a4a] leading-[1.250] whitespace-nowrap text-[#3d4148] [font-family:Inter,'Noto_Sans_CJK_SC',sans-serif] [zoom:0.61492]">
      <h1 className="mt-[140px] ml-[204px] flex h-[102px] items-center pt-[3px] text-[79px] font-medium text-white">TMIST (UCB) V 3.0 部分关键页面</h1>
      <div className="mt-[109px] ml-[204px] flex items-start">
        <div className="flex w-[999px] flex-col gap-[34px]">
          <Title>业务决策</Title>
          <DecisionBoard />
        </div>
        <div className="ml-[55px] flex w-[1000px] flex-col gap-[34px]">
          <Title>参考信息——产品竞品信息</Title>
          <ReferenceBoard />
        </div>
        <div className="ml-[60px] flex w-[1000px] flex-col gap-[34px]">
          <Title>决策回顾</Title>
          <ReviewBoard />
        </div>
        <div className="ml-[56px] flex w-[1009px] flex-col gap-[34px]">
          <div className="pl-[3px]">
            <Title>非最后周期-周期销售报告</Title>
          </div>
          <ReportBoard />
        </div>
        <div className="ml-[60px] flex w-[1006px] flex-col gap-[34px]">
          <div className="pl-[6px]">
            <Title>完成测试页面</Title>
          </div>
          <FinishBoard />
          <div className="mt-[99px] pl-[6px]">
            <Title>历史成果（主页进入查看）</Title>
          </div>
          <HistoryBoard />
        </div>
        <div className="ml-[60px] flex w-[1000px] flex-col gap-[34px]">
          <Title>主页（首次或完成状态时）</Title>
          <HomeBoard note="ucb因独立项目，暂时下拉菜单仅有退出登录" buttons={["开始部署"]} />
          <div className="-mt-[1px]">
            <Title>主页（未完成状态）</Title>
          </div>
          <HomeBoard progress buttons={["重新部署", "继续部署"]} />
        </div>
      </div>
    </main>
  );
}
